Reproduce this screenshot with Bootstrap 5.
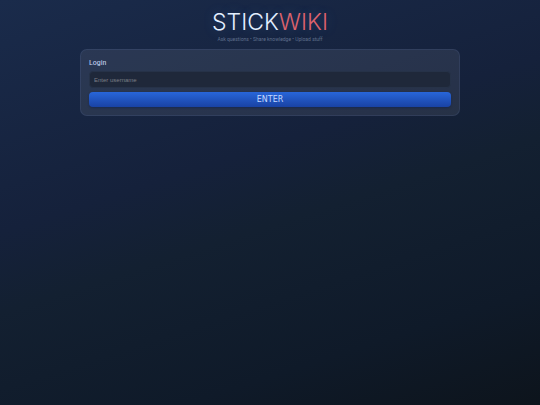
<!DOCTYPE html>
<html lang="en" data-bs-theme="dark">
<head>
<meta charset="utf-8">
<meta name="viewport" content="width=device-width, initial-scale=1">
<title>StickWiki</title>
<link href="https://cdn.jsdelivr.net/npm/bootstrap@5.3.0/dist/css/bootstrap.min.css" rel="stylesheet">
<style>
body {
  background: linear-gradient(162deg, #1a2b4b 0%, #15213b 40%, #132031 54%, #0f1a29 80%, #0d141c 100%) no-repeat;
  font-family: Roboto, sans-serif;
}
.shell { max-width: 380px; }
.wordmark {
  font: 300 23px/28px Inter, sans-serif;
  color: #e3efff;
  text-shadow: 0 0 12px rgba(70, 130, 220, .3);
}
.wordmark span { color: #dc626c; }
.tagline { font: 5px/6px Roboto, sans-serif; color: #5f6f8c; margin: 0 0 7px; }
.panel {
  background: rgba(255, 255, 255, .08);
  border: 1px solid rgba(120, 150, 210, .12);
  border-radius: 7px;
  padding: 8px;
}
.panel label { font: 8px/9px "Roboto Condensed", Roboto, sans-serif; color: #c6d5f2; }
.panel .form-control {
  font: 6px/8px "Liberation Sans", sans-serif;
  color: #dbe5f5;
  background: #1f283a;
  border: 1px solid #263248;
  border-radius: 4px;
  padding: 3px 4px;
  min-height: 17px;
}
.panel .form-control::placeholder { color: #7c7f86; }
.btn-enter {
  font: 8px/11px "DejaVu Sans", sans-serif;
  color: #c3d8ff;
  background: linear-gradient(#2866d9, #1942a4);
  border: 0;
  border-radius: 4px;
  padding: 2px;
  box-shadow: 0 1px 2px rgba(10, 30, 80, .5);
}
.btn-enter:hover { color: #fff; background: #2866d9; }
</style>
</head>
<body class="min-vh-100">
<main class="shell mx-auto pt-2">
  <header class="text-center">
    <h1 class="wordmark m-0">STICK<span>WIKI</span></h1>
    <p class="tagline">Ask questions • Share knowledge • Upload stuff</p>
  </header>
  <form class="panel d-flex flex-column">
    <label for="username" class="mb-1">Login</label>
    <input id="username" type="text" class="form-control mb-1" placeholder="Enter username">
    <button type="button" class="btn btn-enter w-100">ENTER</button>
  </form>
</main>
<script src="https://cdn.jsdelivr.net/npm/bootstrap@5.3.0/dist/js/bootstrap.bundle.min.js"></script>
</body>
</html>
